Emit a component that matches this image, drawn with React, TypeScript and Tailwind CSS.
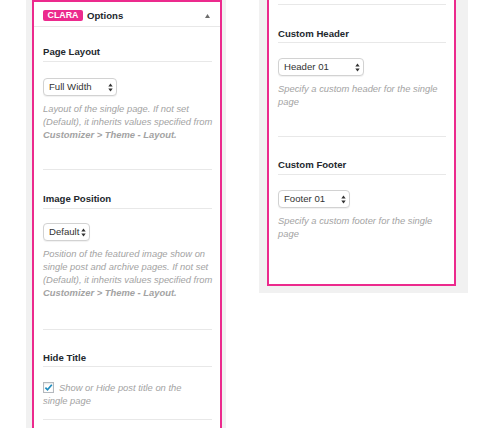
import React from "react";

const Arrows = () => (
  <svg width="5" height="9" viewBox="0 0 5 9" className="shrink-0">
    <polygon points="0.3,3.6 2.5,0.6 4.7,3.6" fill="#333" />
    <polygon points="0.3,5.4 4.7,5.4 2.5,8.4" fill="#333" />
  </svg>
);

function Select({ label, w }: { label: string; w: string }) {
  return (
    <div
      className={`flex items-center justify-between h-[18px] rounded-[4px] border border-[#d2d2d2] bg-white pl-[5px] pr-[3px] text-[9.6px] leading-[12px] text-[#333] shadow-[0_1px_1px_rgba(0,0,0,0.06)] ${w}`}
    >
      <span className="whitespace-nowrap">{label}</span>
      <Arrows />
    </div>
  );
}

function Title({ children, pb }: { children: React.ReactNode; pb: string }) {
  return (
    <div
      className={`border-b border-[#e8e8e8] text-[9.6px] leading-[13px] font-bold text-[#23282d] ${pb}`}
    >
      {children}
    </div>
  );
}

function Desc({ children, mt }: { children: React.ReactNode; mt: string }) {
  return (
    <div className={`${mt} text-[9.4px] leading-[13px] italic text-[#a3a3a3]`}>
      {children}
    </div>
  );
}

const L = ({ children }: { children: React.ReactNode }) => (
  <div className="whitespace-nowrap">{children}</div>
);

export default function App() {
  return (
    <div className="h-[428px] w-[500px] overflow-hidden bg-white font-['Liberation_Sans',Arial,sans-serif]">
      <div className="flex items-start pl-[26px] gap-[33px]">
        {/* Left column */}
        <div className="w-[200px] h-[460px] bg-[#f1f1f1] pl-[6px] pr-[4px]">
          <div className="h-full border-2 border-b-0 border-[#ec2a8d] bg-white">
            <div className="flex h-[25px] items-start justify-between border-b border-[#e8e8e8] pl-[9px] pr-[10px] pt-[8px]">
              <div className="flex items-center h-[11px]">
                <span className="flex h-[11px] w-[40px] items-center justify-center rounded-[2px] bg-[#ec2a8d] text-[8.9px] leading-[11px] font-bold text-white">
                  CLARA
                </span>
                <span className="ml-[4px] text-[9.6px] leading-[11px] font-bold text-[#23282d]">
                  Options
                </span>
              </div>
              <svg width="5" height="4" viewBox="0 0 5 4" className="mt-[4px]">
                <polygon points="0,4 2.5,0 5,4" fill="#6d6d6d" />
              </svg>
            </div>
            <div className="pl-[9px] pr-[8px]">
              {/* Page Layout */}
              <div className="pt-[18px] pb-[28px]">
                <Title pb="pb-[3px]">Page Layout</Title>
                <div className="mt-[16px]">
                  <Select label="Full Width" w="w-[74px]" />
                </div>
                <Desc mt="mt-[6px]">
                  <L>Layout of the single page. If not set</L>
                  <L>(Default), it inherits values specified from</L>
                  <L>
                    <span className="font-bold">Customizer &gt; Theme - Layout.</span>
                  </L>
                </Desc>
              </div>
              {/* Image Position */}
              <div className="border-t border-[#e8e8e8] pt-[22px] pb-[30px]">
                <Title pb="pb-[3px]">Image Position</Title>
                <div className="mt-[14px]">
                  <Select label="Default" w="w-[47px]" />
                </div>
                <Desc mt="mt-[6px]">
                  <L>Position of the featured image show on</L>
                  <L>single post and archive pages. If not set</L>
                  <L>(Default), it inherits values specified from</L>
                  <L>
                    <span className="font-bold">Customizer &gt; Theme - Layout.</span>
                  </L>
                </Desc>
              </div>
              {/* Hide Title */}
              <div className="border-t border-[#e8e8e8] pt-[21px] pb-[12px]">
                <Title pb="pb-[2px]">Hide Title</Title>
                <Desc mt="mt-[14px]">
                  <div className="whitespace-nowrap flex items-center h-[13px]">
                    <span className="mr-[5px] flex h-[11px] w-[11px] shrink-0 items-center justify-center border border-[#b4b9be] bg-white shadow-[inset_0_1px_2px_rgba(0,0,0,0.1)]">
                      <svg width="9" height="9" viewBox="0 0 9 9">
                        <path
                          d="M1.4 4.6 L3.5 6.8 L7.8 1.8"
                          fill="none"
                          stroke="#1e8cbe"
                          strokeWidth="1.7"
                        />
                      </svg>
                    </span>
                    <span>Show or Hide post title on the</span>
                  </div>
                  <L>single page</L>
                </Desc>
              </div>
              <div className="border-t border-[#e8e8e8] h-[20px]" />
            </div>
          </div>
        </div>

        {/* Right column */}
        <div className="w-[209px] bg-[#f1f1f1] pl-[8px] pr-[12px] pb-[7px]">
          <div className="border-2 border-t-0 border-[#ec2a8d] bg-white pl-[9px] pr-[8px] pb-[44px]">
            <div className="h-[4px]" />
            <div className="border-t border-[#e8e8e8] pt-[22px] pb-[28px]">
              <Title pb="pb-[2px]">Custom Header</Title>
              <div className="mt-[15px]">
                <Select label="Header 01" w="w-[86px]" />
              </div>
              <Desc mt="mt-[6px]">
                <L>Specify a custom header for the single</L>
                <L>page</L>
              </Desc>
            </div>
            <div className="border-t border-[#e8e8e8] pt-[21px]">
              <Title pb="pb-[3px]">Custom Footer</Title>
              <div className="mt-[15px]">
                <Select label="Footer 01" w="w-[72px]" />
              </div>
              <Desc mt="mt-[6px]">
                <L>Specify a custom footer for the single</L>
                <L>page</L>
              </Desc>
            </div>
          </div>
        </div>
      </div>
    </div>
  );
}
